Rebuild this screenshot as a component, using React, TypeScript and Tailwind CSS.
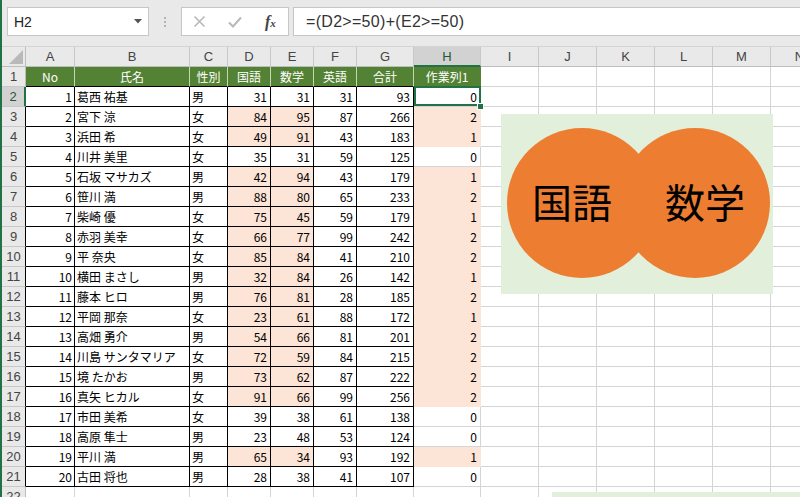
import React from "react";

type Row = [number, string, string, number, number, number, number, number];

const data: Row[] = [
  [1, "葛西 祐基", "男", 31, 31, 31, 93, 0],
  [2, "宮下 涼", "女", 84, 95, 87, 266, 2],
  [3, "浜田 希", "女", 49, 91, 43, 183, 1],
  [4, "川井 美里", "女", 35, 31, 59, 125, 0],
  [5, "石坂 マサカズ", "男", 42, 94, 43, 179, 1],
  [6, "笹川 満", "男", 88, 80, 65, 233, 2],
  [7, "柴崎 優", "女", 75, 45, 59, 179, 1],
  [8, "赤羽 美幸", "女", 66, 77, 99, 242, 2],
  [9, "平 奈央", "女", 85, 84, 41, 210, 2],
  [10, "横田 まさし", "男", 32, 84, 26, 142, 1],
  [11, "藤本 ヒロ", "男", 76, 81, 28, 185, 2],
  [12, "平岡 那奈", "女", 23, 61, 88, 172, 1],
  [13, "高畑 勇介", "男", 54, 66, 81, 201, 2],
  [14, "川島 サンタマリア", "女", 72, 59, 84, 215, 2],
  [15, "境 たかお", "男", 73, 62, 87, 222, 2],
  [16, "真矢 ヒカル", "女", 91, 66, 99, 256, 2],
  [17, "市田 美希", "女", 39, 38, 61, 138, 0],
  [18, "高原 隼士", "男", 23, 48, 53, 124, 0],
  [19, "平川 満", "男", 65, 34, 93, 192, 1],
  [20, "古田 将也", "男", 28, 38, 41, 107, 0],
];

const letters = ["A", "B", "C", "D", "E", "F", "G", "H", "I", "J", "K", "L", "M", "N"];
const headers = ["No", "氏名", "性別", "国語", "数学", "英語", "合計"];

const blk = "flex items-center border-r border-b border-black";
const grid = "border-r border-b border-[#d4d4d4]";
const peach = "bg-[#fce4d6]";

function EmptyRight() {
  return (
    <>
      <div className={grid} />
      <div className={grid} />
      <div className={grid} />
      <div className={grid} />
      <div className={grid} />
      <div className={grid} />
    </>
  );
}

export default function App() {
  return (
    <div className="relative w-[800px] h-[497px] overflow-hidden flex bg-white font-['Liberation_Sans',Arial,sans-serif]">
      <div className="w-[2px] shrink-0 bg-[#217346]" />
      <div className="flex-1 flex flex-col min-w-0 overflow-hidden">
        {/* toolbar */}
        <div className="h-[47px] shrink-0 bg-[#e9e9e9] border-b border-[#d4d4d4] flex items-start pt-[7px] pl-[5px]">
          <div className="shrink-0 w-[142px] h-[29px] bg-white border border-[#c6c6c6] flex items-center pl-[6px] pr-[6px]">
            <span className="text-[14px] text-[#222] leading-none">H2</span>
            <svg className="ml-auto" width="8" height="5" viewBox="0 0 8 5">
              <polygon points="0,0 8,0 4,4.5" fill="#555" />
            </svg>
          </div>
          <div className="shrink-0 w-[32px] h-[29px] flex flex-col items-center justify-center gap-[2px]">
            <div className="w-[2px] h-[2px] bg-[#b4b4b4]" />
            <div className="w-[2px] h-[2px] bg-[#b4b4b4]" />
            <div className="w-[2px] h-[2px] bg-[#b4b4b4]" />
          </div>
          <div className="shrink-0 w-[108px] h-[29px] bg-white border border-[#c6c6c6] grid grid-cols-3 items-center justify-items-center">
            <svg width="13" height="13" viewBox="0 0 13 13">
              <path d="M1.5 1.5 L11.5 11.5 M11.5 1.5 L1.5 11.5" stroke="#b8b8b8" strokeWidth="1.6" fill="none" />
            </svg>
            <svg width="14" height="12" viewBox="0 0 14 12">
              <path d="M1 6.5 L5 10.5 L13 1.5" stroke="#b8b8b8" strokeWidth="2" fill="none" />
            </svg>
            <span className="italic font-['Liberation_Serif',serif] text-[16px] text-[#444] leading-none font-bold">
              f<span className="text-[11px]">x</span>
            </span>
          </div>
          <div className="shrink-0 ml-[4px] w-[540px] h-[29px] bg-white border border-[#c6c6c6] flex items-center pl-[12px]">
            <span className="text-[16px] text-[#333] tracking-[0.3px] leading-none">=(D2&gt;=50)+(E2&gt;=50)</span>
          </div>
        </div>

        {/* sheet */}
        <div className="grid grid-cols-[24px_49px_115px_38px_43px_43px_43px_57px_67px_58px_58px_58px_58px_58px_58px] auto-rows-[20px] text-[12px] leading-none">
          {/* column headers */}
          <div className="relative bg-[#e9e9e9] border-r border-b border-[#bdbdbd]">
            <svg className="absolute right-[2px] bottom-[2px]" width="14" height="14" viewBox="0 0 14 14">
              <polygon points="14,0 14,14 0,14" fill="#b9b9b9" />
            </svg>
          </div>
          {letters.map((l) =>
            l === "H" ? (
              <div key={l} className="flex items-center justify-center bg-[#d2d2d2] border-r border-[#c8c8c8] border-b-2 border-b-[#217346] text-[#1f5a36] text-[13px]">
                {l}
              </div>
            ) : (
              <div key={l} className="flex items-center justify-center bg-[#e9e9e9] border-r border-b border-[#c8c8c8] border-b-[#bdbdbd] text-[#444] text-[13px]">
                {l}
              </div>
            )
          )}

          {/* row 1 */}
          <div className="flex items-center justify-center bg-[#e9e9e9] border-r border-b border-[#c8c8c8] border-r-[#bdbdbd] text-[#444] text-[13px]">1</div>
          {headers.map((h) => (
            <div key={h} className="flex items-center justify-center bg-[#548235] text-white border-r border-b border-r-[#c5d5b8] border-b-black font-['Noto_Sans_CJK_JP',sans-serif]">
              {h}
            </div>
          ))}
          <div className="flex items-center justify-center bg-[#548235] text-white border-r border-r-[#548235] border-b border-b-[#1f5a36] font-['Noto_Sans_CJK_JP',sans-serif]">
            作業列1
          </div>
          <EmptyRight />

          {/* data rows */}
          {data.map((r, i) => {
            const rowNo = i + 2;
            const sel = rowNo === 2;
            const hit = r[7] > 0;
            return (
              <React.Fragment key={rowNo}>
                <div
                  className={
                    sel
                      ? "flex items-center justify-center bg-[#d2d2d2] border-b border-b-[#c8c8c8] border-r-2 border-r-[#217346] text-[#1f5a36] text-[13px]"
                      : "flex items-center justify-center bg-[#e9e9e9] border-b border-b-[#c8c8c8] border-r border-r-black text-[#444] text-[13px]"
                  }
                >
                  {rowNo}
                </div>
                <div className={`${blk} justify-end pr-[2px] font-['Noto_Sans_CJK_JP',sans-serif]`}>{r[0]}</div>
                <div className={`${blk} pl-[2px] font-['Noto_Sans_CJK_JP',sans-serif] whitespace-nowrap`}>{r[1]}</div>
                <div className={`${blk} pl-[2px] font-['Noto_Sans_CJK_JP',sans-serif]`}>{r[2]}</div>
                <div className={`${blk} justify-end pr-[3px] font-['Noto_Sans_CJK_JP',sans-serif] ${hit ? peach : ""}`}>{r[3]}</div>
                <div className={`${blk} justify-end pr-[3px] font-['Noto_Sans_CJK_JP',sans-serif] ${hit ? peach : ""}`}>{r[4]}</div>
                <div className={`${blk} justify-end pr-[3px] font-['Noto_Sans_CJK_JP',sans-serif]`}>{r[5]}</div>
                <div className={`${blk} justify-end pr-[3px] font-['Noto_Sans_CJK_JP',sans-serif]`}>{r[6]}</div>
                {sel ? (
                  <div className={`relative flex items-center justify-end pr-[3px] font-['Noto_Sans_CJK_JP',sans-serif] ${grid}`}>
                    {r[7]}
                    <div className="absolute -top-px left-0 -right-px bottom-0 border-2 border-[#217346] z-10" />
                    <div className="absolute -right-[4px] -bottom-[4px] w-[7px] h-[7px] bg-[#217346] border border-white z-20" />
                  </div>
                ) : (
                  <div
                    className={`flex items-center justify-end pr-[3px] font-['Noto_Sans_CJK_JP',sans-serif] ${
                      hit ? "bg-[#fce4d6] border-r border-b border-[#fce4d6]" : grid
                    }`}
                  >
                    {r[7]}
                  </div>
                )}
                <EmptyRight />
              </React.Fragment>
            );
          })}

          {/* row 22 */}
          <div className="flex items-center justify-center bg-[#e9e9e9] border-r border-b border-[#c8c8c8] border-r-[#bdbdbd] text-[#444] text-[13px]">22</div>
          {letters.map((l) => (
            <div key={l} className={grid} />
          ))}
        </div>
      </div>

      {/* Venn diagram shape */}
      <div className="absolute left-[501px] top-[114px] w-[272px] h-[180px] bg-[#e2efda] z-10">
        <div className="absolute left-[6px] top-[14px] w-[150px] h-[150px] rounded-full bg-[#ed7d31]" />
        <div className="absolute left-[119px] top-[14px] w-[150px] h-[150px] rounded-full bg-[#ed7d31]" />
        <div className="absolute left-[31px] top-[62px] w-[80px] h-[50px] flex items-center justify-center text-[40px] text-black font-['Noto_Sans_CJK_JP',sans-serif] leading-none">
          国語
        </div>
        <div className="absolute left-[164px] top-[62px] w-[80px] h-[50px] flex items-center justify-center text-[40px] text-black font-['Noto_Sans_CJK_JP',sans-serif] leading-none">
          数学
        </div>
      </div>

      {/* another shape peeking at the bottom */}
      <div className="absolute left-[552px] top-[492px] w-[260px] h-[20px] bg-[#e2efda] z-10" />
    </div>
  );
}
